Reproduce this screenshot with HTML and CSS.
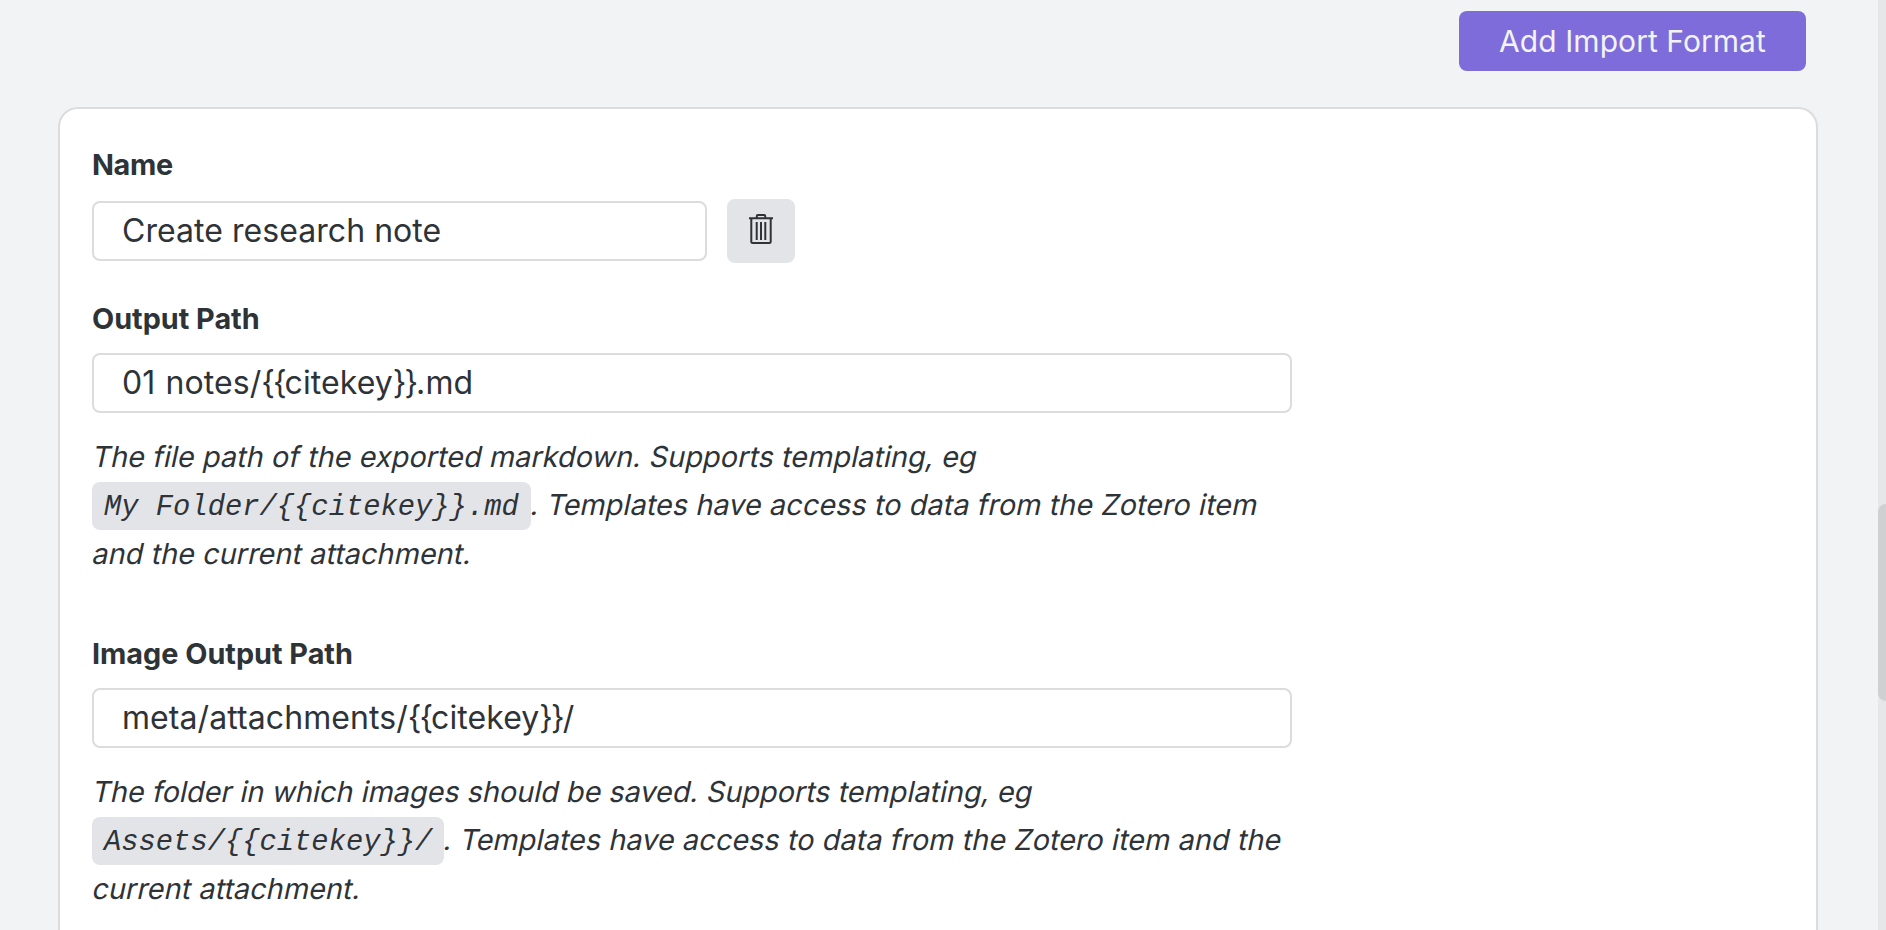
FILE: index.html
```html
<!DOCTYPE html>
<html lang="en"><head><meta charset="utf-8"><title>Import Formats</title><link rel="stylesheet" href="styles.css"></head>
<body>
<main class="settings">
<div class="toolbar"><button class="add">Add Import Format</button></div>
<section class="card">
<div class="field name"><label class="tight">Name</label><div class="row"><div class="input short">Create research note</div><button class="trash" aria-label="Delete"><svg viewBox="0 0 24 32" width="24" height="32" fill="none" stroke="currentColor" stroke-width="2"><path d="M0 5.300H24M7.800 5V3Q7.800 2 8.800 2H15.200Q16.200 2 16.200 3V5M2.300 5V28.500Q2.300 30 3.800 30H20.200Q21.700 30 21.700 28.500V5M7.700 9V27M12 9V27M16.300 9V27"/></svg></button></div></div>
<div class="field output"><label>Output Path</label><div class="input path">01 notes/<span class="brace">{{</span>citekey<span class="brace">}}</span>.md</div>
<p><span class="line"><span class="slant">The file path of the exported markdown. Supports templating, eg</span></span>
<span class="line"><code>My Folder/{{citekey}}.md</code><span class="slant rest">. Templates have access to data from the Zotero item</span></span>
<span class="line"><span class="slant">and the current attachment.</span></span></p></div>
<div class="field image"><label>Image Output Path</label><div class="input path">meta/attachments/<span class="brace">{{</span>citekey<span class="brace">}}</span>/</div>
<p><span class="line"><span class="slant snug">The folder in which images should be saved. Supports templating, eg</span></span>
<span class="line"><code>Assets/{{citekey}}/</code><span class="slant rest">. Templates have access to data from the Zotero item and the</span></span>
<span class="line"><span class="slant">current attachment.</span></span></p></div>
</section>
</main>
<div class="scrollbar"><div class="thumb"></div></div>
</body></html>
```
FILE: styles.css
```css
* { box-sizing: border-box; }
body { margin: 0; height: 930px; overflow: hidden; display: flex; background: #f2f3f5; color: #2e3338; font-family: Inter, sans-serif; }
.settings { flex: 1; padding: 11px 60px 0 58px; }
.toolbar { display: flex; justify-content: flex-end; padding-right: 12px; height: 96px; }
button { border: 0; padding: 0; font-family: inherit; }
.add { width: 347px; height: 60px; border-radius: 8px; background: #7d6cd9; color: #f2f3f5; font-size: 30px; letter-spacing: 0.06px; }
.card { height: 823px; border: 2px solid #dcdcdc; border-bottom: 0; border-radius: 20px 20px 0 0; background: #fff; padding: 38px 32px 0; }
.field { width: 1200px; }
label { display: block; height: 52px; line-height: 36px; font-size: 28.8px; font-weight: 700; }
.tight { letter-spacing: -0.35px; }
.row { display: flex; align-items: center; gap: 20px; height: 64px; }
.input { height: 60px; border: 2px solid #dcdcdc; border-radius: 8px; background: #fff; padding: 0 28px; line-height: 56px; font-size: 32px; }
.short { width: 615px; letter-spacing: 0.05px; }
.path { letter-spacing: 0.08px; word-spacing: 1px; }
.brace { letter-spacing: -2px; }
.trash { display: grid; place-items: center; width: 68px; height: 64px; padding-bottom: 4px; border-radius: 8px; background: #e3e4e8; color: #2e3338; }
.output { margin-top: 38px; }
.image { margin-top: 57.5px; }
p { margin: 20px 0 0; font-size: 28.8px; line-height: 48.5px; white-space: nowrap; }
.line { display: flex; height: 48.5px; }
/* Slanted upright letterforms keep the roman shapes of a and f. */
.slant { margin-left: -1px; white-space: pre; letter-spacing: 0.06px; transform: skewX(-12deg); transform-origin: 0 34px; }
.rest { margin-left: -2px; line-height: 46.5px; letter-spacing: 0.08px; }
.snug { letter-spacing: 0; }
code { height: 48px; padding: 0 12px; border-radius: 8px; background: #e3e4e8; font-family: "Liberation Mono", monospace; font-size: 28.8px; line-height: 52px; font-style: italic; }
.scrollbar { width: 8px; padding-top: 504px; background: #e6e7e8; }
.thumb { height: 197px; background: #cfd0d1; border-radius: 8px 0 0 8px; }
```
